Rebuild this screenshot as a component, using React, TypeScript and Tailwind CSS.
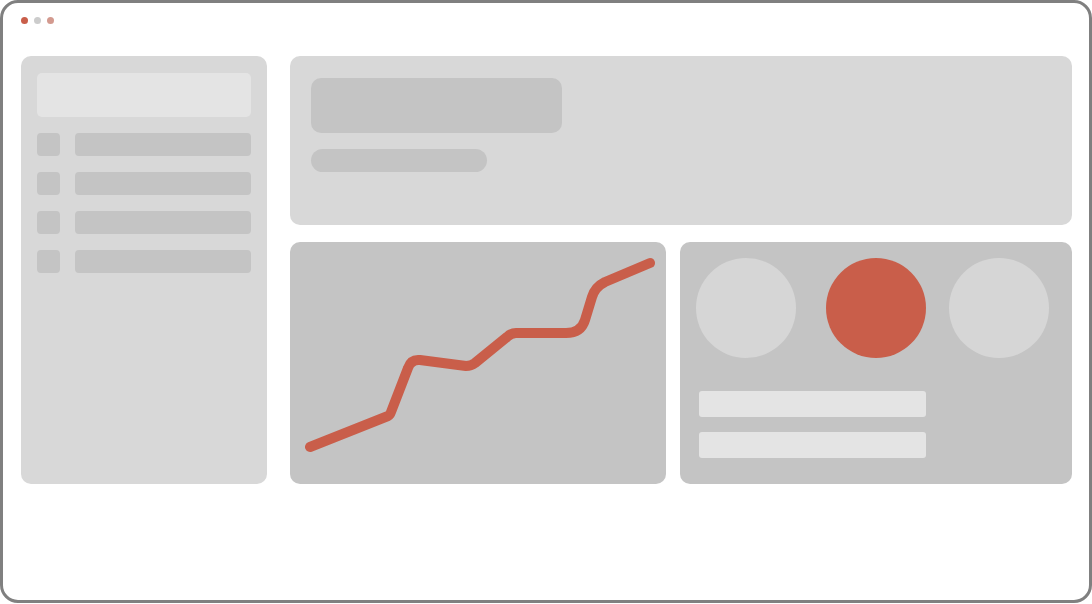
import React from 'react';

const SidebarRow: React.FC = () => (
    <div className="flex items-center gap-[15px]">
        <div className="w-[23px] h-[23px] rounded-[4px] bg-[#c4c4c4]" />
        <div className="w-[176px] h-[23px] rounded-[4px] bg-[#c4c4c4]" />
    </div>
);

const Sidebar: React.FC = () => (
    <aside className="w-[246px] h-[428px] shrink-0 bg-[#d8d8d8] rounded-[10px] pt-[17px] px-[16px]">
        <div className="w-[214px] h-[44px] rounded-[5px] bg-[#e4e4e4]" />
        <div className="mt-[16px] flex flex-col gap-[16px]">
            {[0, 1, 2, 3].map((i) => (
                <SidebarRow key={i} />
            ))}
        </div>
    </aside>
);

const HeaderPanel: React.FC = () => (
    <section className="h-[169px] bg-[#d8d8d8] rounded-[10px] pt-[22px] px-[21px]">
        <div className="w-[251px] h-[55px] rounded-[10px] bg-[#c4c4c4]" />
        <div className="mt-[16px] w-[176px] h-[23px] rounded-full bg-[#c4c4c4]" />
    </section>
);

const ChartCard: React.FC = () => (
    <div className="w-[376px] h-[242px] shrink-0 bg-[#c4c4c4] rounded-[10px] overflow-hidden">
        <svg viewBox="0 0 376 242" width="376" height="242">
            <path
                d="M20 205 L98 174 Q100 173 101 170 L118 126 Q121 117 130 118 L176 124 Q181 124 185 121 L217 95 Q221 91 226 91 L276 91 Q291 91 295 78 L302 55 Q305 45 315 40 L360 21"
                fill="none"
                stroke="#c95e4a"
                strokeWidth="10"
                strokeLinecap="round"
                strokeLinejoin="round"
            />
        </svg>
    </div>
);

const StatsCard: React.FC = () => (
    <div className="flex-1 h-[242px] bg-[#c4c4c4] rounded-[10px] pt-[16px] pl-[16px]">
        <div className="flex">
            <div className="w-[100px] h-[100px] rounded-full bg-[#d6d6d6]" />
            <div className="ml-[30px] w-[100px] h-[100px] rounded-full bg-[#c95e4a]" />
            <div className="ml-[23px] w-[100px] h-[100px] rounded-full bg-[#d6d6d6]" />
        </div>
        <div className="mt-[33px] ml-[3px] flex flex-col gap-[15px]">
            <div className="w-[227px] h-[26px] rounded-[3px] bg-[#e4e4e4]" />
            <div className="w-[227px] h-[26px] rounded-[3px] bg-[#e4e4e4]" />
        </div>
    </div>
);

const App: React.FC = () => {
    return (
        <div className="w-[1092px] h-[604px] bg-white">
            <div className="w-[1092px] h-[603px] border-[3px] border-[#808080] rounded-[18px] bg-white pl-[18px] pr-[17px]">
                {/* window dots */}
                <div className="flex gap-[6px] mt-[14px]">
                    <span className="w-[7px] h-[7px] rounded-full bg-[#c95e4a]" />
                    <span className="w-[7px] h-[7px] rounded-full bg-[#cccccc]" />
                    <span className="w-[7px] h-[7px] rounded-full bg-[#d39a8f]" />
                </div>

                <div className="mt-[32px] flex gap-[23px]">
                    <Sidebar />
                    <main className="flex-1 flex flex-col gap-[17px]">
                        <HeaderPanel />
                        <div className="flex gap-[14px]">
                            <ChartCard />
                            <StatsCard />
                        </div>
                    </main>
                </div>
            </div>
        </div>
    );
};

export default App;
